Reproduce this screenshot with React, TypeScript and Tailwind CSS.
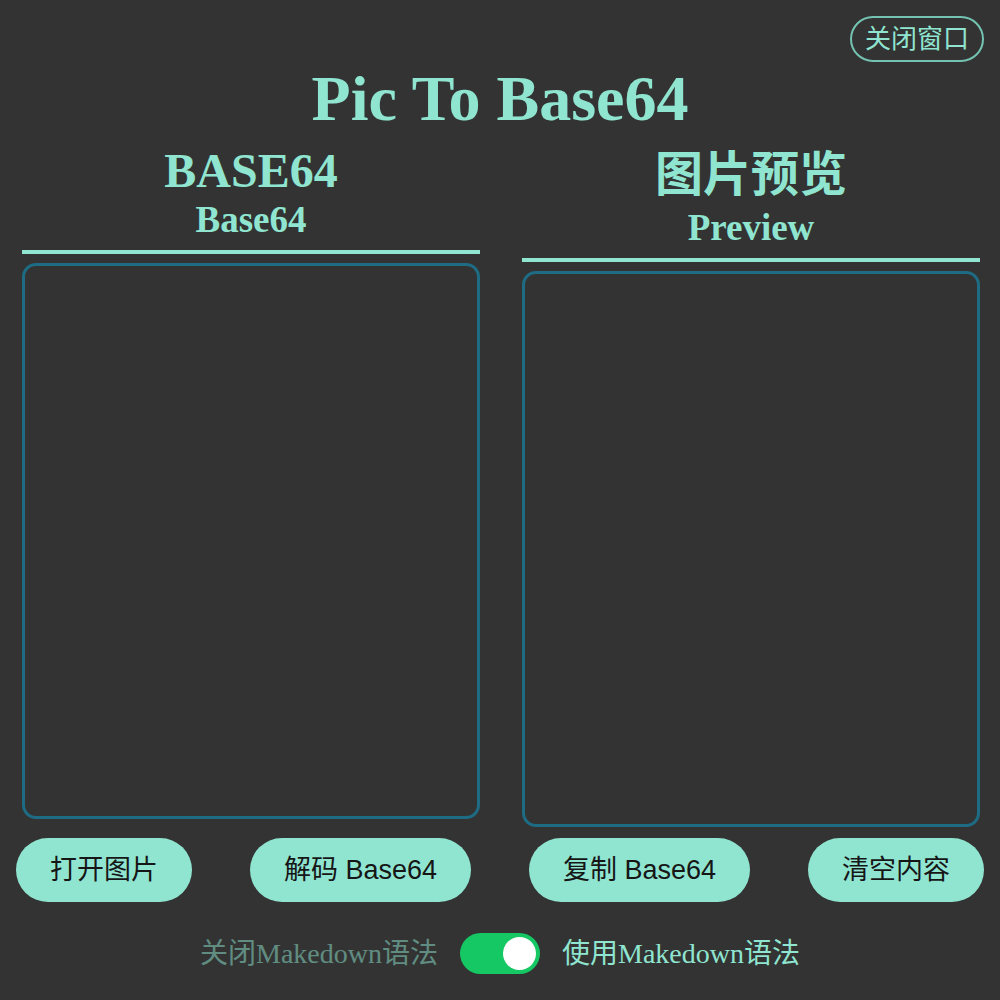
import { useState } from 'react'

const serif = { fontFamily: "'Liberation Serif', 'Noto Sans CJK SC', serif" }
const sans = { fontFamily: "'Liberation Sans', 'Noto Sans CJK SC', sans-serif" }

function PillButton({ label }: { label: string }) {
  return (
    <button
      style={sans}
      className="h-[64px] px-[34px] rounded-full bg-[#90e5d1] text-[#161616] text-[27px] leading-none whitespace-nowrap"
    >
      {label}
    </button>
  )
}

export default function App() {
  const [markdown, setMarkdown] = useState(true)

  return (
    <div style={serif} className="min-h-screen w-full bg-[#333333] text-[#8fe5d0]">
      <div className="flex justify-end pt-4 pr-4">
        <button
          style={sans}
          className="h-[46px] px-[13px] rounded-full border-2 border-[#74c3b2] text-[26px] leading-none text-[#8fe5d0]"
        >
          关闭窗口
        </button>
      </div>

      <h1 className="text-center text-[64px] leading-[74px] font-bold">Pic To Base64</h1>

      <div className="flex items-start gap-[42px] pl-[22px] pr-[20px] mt-[7px]">
        <div className="w-[458px]">
          <div className="text-center font-bold border-b-4 border-[#8fe5d0] pb-[9px]">
            <h2 className="text-[48px] leading-[56px]">BASE64</h2>
            <h3 className="text-[37px] leading-[42px]">Base64</h3>
          </div>
          <textarea className="block mt-[9px] w-full h-[556px] resize-none bg-transparent border-[3px] border-[#1e6b84] rounded-[14px] outline-none p-3 text-sm" />
        </div>

        <div className="w-[458px]">
          <div className="text-center font-bold border-b-4 border-[#8fe5d0] pb-[9px]">
            <h2 className="text-[48px] leading-[64px]">图片预览</h2>
            <h3 className="text-[37px] leading-[42px]">Preview</h3>
          </div>
          <div className="mt-[9px] w-full h-[556px] border-[3px] border-[#1e6b84] rounded-[14px]" />
        </div>
      </div>

      <div className="flex justify-between px-4 mt-[11px]">
        <PillButton label="打开图片" />
        <PillButton label="解码 Base64" />
        <PillButton label="复制 Base64" />
        <PillButton label="清空内容" />
      </div>

      <div className="flex justify-center items-center gap-[22px] mt-[31px] text-[28px] leading-none">
        <span className={markdown ? 'opacity-50' : ''}>关闭Makedown语法</span>
        <button
          onClick={() => setMarkdown(!markdown)}
          className={`w-[80px] h-[41px] rounded-full p-[4px] flex items-center ${markdown ? 'bg-[#15c863] justify-end' : 'bg-[#666666] justify-start'}`}
        >
          <span className="block w-[33px] h-[33px] rounded-full bg-white" />
        </button>
        <span className={markdown ? '' : 'opacity-50'}>使用Makedown语法</span>
      </div>
    </div>
  )
}
